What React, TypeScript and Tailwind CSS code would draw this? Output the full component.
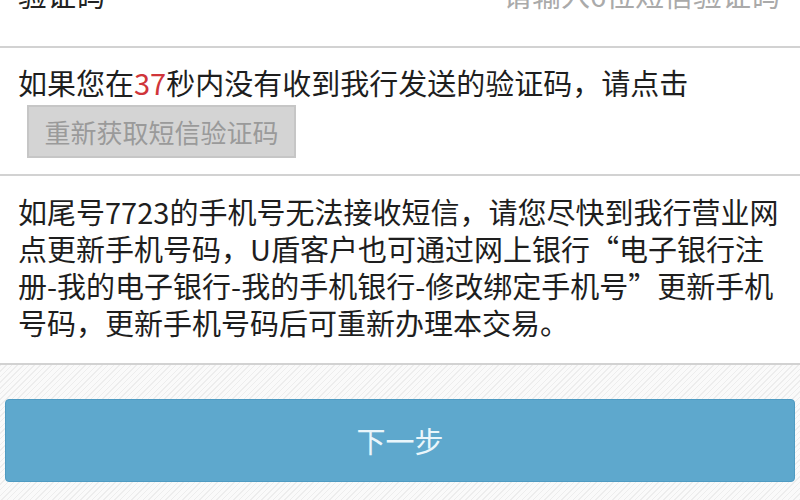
import React from "react";

const FONT = "font-['Noto_Sans_CJK_SC','Noto_Sans',sans-serif]";

export default function App() {
  return (
    <div className={`h-[500px] w-[800px] overflow-hidden bg-white flex flex-col ${FONT}`}>
      {/* 验证码输入行（上半部分被裁掉） */}
      <div className="-mt-[56px] h-[104px] shrink-0 flex items-center justify-between px-[18px] border-b-2 border-[#d2d2d2]">
        <span className="text-[29px] text-[#222]">验证码</span>
        <span className="text-[29px] text-[#aaa] pr-[2px]">请输入6位短信验证码</span>
      </div>

      {/* 重新获取 */}
      <div className="shrink-0 px-[18px] pt-[16px] pb-[16px] border-b-2 border-[#d2d2d2]">
        <p className="text-[29px] leading-[37px] text-[#1e1e1e] whitespace-nowrap">
          如果您在<span className="text-[#d0353a]">37</span>秒内没有收到我行发送的验证码，请点击
        </p>
        <button className="mt-[4px] ml-[9px] h-[53px] w-[269px] bg-[#d4d4d4] border-2 border-[#c6c6c6] text-[26px] text-[#9a9a9a] leading-none">
          重新获取短信验证码
        </button>
      </div>

      {/* 说明 */}
      <div className="shrink-0 px-[18px] pt-[17px] pb-[22px] border-b-2 border-[#d2d2d2]">
        <p className="text-[29px] leading-[37px] text-[#1e1e1e] whitespace-nowrap">
          如尾号7723的手机号无法接收短信，请您尽快到我行营业网
          <br />
          点更新手机号码，U盾客户也可通过网上银行“电子银行注
          <br />
          册-我的电子银行-我的手机银行-修改绑定手机号”更新手机
          <br />
          号码，更新手机号码后可重新办理本交易。
        </p>
      </div>

      {/* 下一步 */}
      <div className="flex-1 px-[5px] pt-[34px] bg-[repeating-linear-gradient(135deg,#ededed_0px,#ededed_1px,#fafafa_1px,#fafafa_4px)]">
        <button className="w-full h-[83px] rounded-[4px] bg-[#5ea8cd] border border-[#4f9bc2] text-[29px] text-[#eaf6fb] leading-none">
          下一步
        </button>
      </div>
    </div>
  );
}
